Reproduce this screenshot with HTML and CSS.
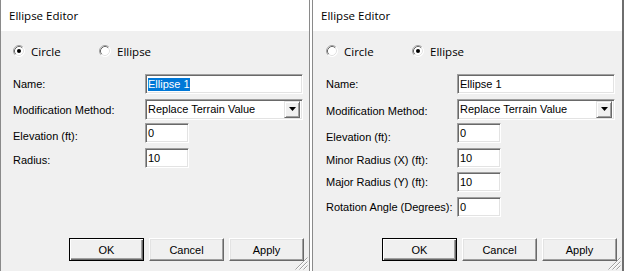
FILE: index.html
```html
<!DOCTYPE html>
<html>
<head>
<meta charset="utf-8">
<link rel="stylesheet" href="styles.css">
</head>
<body>
<div class="screen">
  <div class="dialog dlg-left">
    <div class="titlebar">Ellipse Editor</div>
    <div class="body">
      <div class="radios">
        <div class="radio first">
          <svg class="rb" width="12" height="12" viewBox="0 0 12 12"><circle cx="6" cy="6" r="5.5" fill="#fff"/><path d="M2.11 9.89A5.5 5.5 0 0 1 9.89 2.11" stroke="#a0a0a0" fill="none"/><path d="M9.89 2.11A5.5 5.5 0 0 1 2.11 9.89" stroke="#ffffff" fill="none"/><path d="M2.82 9.18A4.5 4.5 0 0 1 9.18 2.82" stroke="#696969" fill="none"/><path d="M9.18 2.82A4.5 4.5 0 0 1 2.82 9.18" stroke="#e3e3e3" fill="none"/><circle cx="6" cy="6" r="2" fill="#000"/></svg>
          <span>Circle</span>
        </div>
        <div class="radio">
          <svg class="rb" width="12" height="12" viewBox="0 0 12 12"><circle cx="6" cy="6" r="5.5" fill="#fff"/><path d="M2.11 9.89A5.5 5.5 0 0 1 9.89 2.11" stroke="#a0a0a0" fill="none"/><path d="M9.89 2.11A5.5 5.5 0 0 1 2.11 9.89" stroke="#ffffff" fill="none"/><path d="M2.82 9.18A4.5 4.5 0 0 1 9.18 2.82" stroke="#696969" fill="none"/><path d="M9.18 2.82A4.5 4.5 0 0 1 2.82 9.18" stroke="#e3e3e3" fill="none"/></svg>
          <span>Ellipse</span>
        </div>
      </div>
      <div class="form">
        <div class="lbl off0">Name:</div>
        <div class="textbox wide"><span class="sel">Ellipse 1</span></div>
        <div class="lbl off1">Modification Method:</div>
        <div class="combo">
          <span class="combo-text">Replace Terrain Value</span>
          <span class="combo-btn"><svg width="7" height="4" viewBox="0 0 7 4"><path d="M0 0H7L3.5 4Z" fill="#000"/></svg></span>
        </div>
        <div class="lbl off3">Elevation (ft):</div>
        <div class="textbox small">0</div>
        <div class="lbl off2">Radius:</div>
        <div class="textbox small">10</div>
      </div>
      <div class="buttons">
        <div class="btn default">OK</div>
        <div class="btn">Cancel</div>
        <div class="btn">Apply</div>
      </div>
    </div>
    <svg class="grip" width="13" height="13" viewBox="0 0 13 13"><path d="M12.5 0.5L0.5 12.5M12.5 4.5L4.5 12.5M12.5 8.5L8.5 12.5" stroke="#a0a0a0"/><path d="M12.5 1.5L1.5 12.5M12.5 5.5L5.5 12.5M12.5 9.5L9.5 12.5" stroke="#ffffff"/></svg>
  </div>

  <div class="dialog dlg-right">
    <div class="titlebar">Ellipse Editor</div>
    <div class="body">
      <div class="radios">
        <div class="radio first">
          <svg class="rb" width="12" height="12" viewBox="0 0 12 12"><circle cx="6" cy="6" r="5.5" fill="#fff"/><path d="M2.11 9.89A5.5 5.5 0 0 1 9.89 2.11" stroke="#a0a0a0" fill="none"/><path d="M9.89 2.11A5.5 5.5 0 0 1 2.11 9.89" stroke="#ffffff" fill="none"/><path d="M2.82 9.18A4.5 4.5 0 0 1 9.18 2.82" stroke="#696969" fill="none"/><path d="M9.18 2.82A4.5 4.5 0 0 1 2.82 9.18" stroke="#e3e3e3" fill="none"/></svg>
          <span>Circle</span>
        </div>
        <div class="radio">
          <svg class="rb" width="12" height="12" viewBox="0 0 12 12"><circle cx="6" cy="6" r="5.5" fill="#fff"/><path d="M2.11 9.89A5.5 5.5 0 0 1 9.89 2.11" stroke="#a0a0a0" fill="none"/><path d="M9.89 2.11A5.5 5.5 0 0 1 2.11 9.89" stroke="#ffffff" fill="none"/><path d="M2.82 9.18A4.5 4.5 0 0 1 9.18 2.82" stroke="#696969" fill="none"/><path d="M9.18 2.82A4.5 4.5 0 0 1 2.82 9.18" stroke="#e3e3e3" fill="none"/><circle cx="6" cy="6" r="2" fill="#000"/></svg>
          <span>Ellipse</span>
        </div>
      </div>
      <div class="form">
        <div class="lbl off0">Name:</div>
        <div class="textbox wide">Ellipse 1</div>
        <div class="lbl off2">Modification Method:</div>
        <div class="combo">
          <span class="combo-text">Replace Terrain Value</span>
          <span class="combo-btn"><svg width="7" height="4" viewBox="0 0 7 4"><path d="M0 0H7L3.5 4Z" fill="#000"/></svg></span>
        </div>
        <div class="lbl off4">Elevation (ft):</div>
        <div class="textbox small">0</div>
        <div class="lbl off2">Minor Radius (X) (ft):</div>
        <div class="textbox small">10</div>
        <div class="lbl off0">Major Radius (Y) (ft):</div>
        <div class="textbox small">10</div>
        <div class="lbl off0">Rotation Angle (Degrees):</div>
        <div class="textbox small">0</div>
      </div>
      <div class="buttons">
        <div class="btn default">OK</div>
        <div class="btn">Cancel</div>
        <div class="btn">Apply</div>
      </div>
    </div>
    <svg class="grip" width="13" height="13" viewBox="0 0 13 13"><path d="M12.5 0.5L0.5 12.5M12.5 4.5L4.5 12.5M12.5 8.5L8.5 12.5" stroke="#a0a0a0"/><path d="M12.5 1.5L1.5 12.5M12.5 5.5L5.5 12.5M12.5 9.5L9.5 12.5" stroke="#ffffff"/></svg>
  </div>
</div>
</body>
</html>
```

FILE: styles.css
```css
html, body {
  margin: 0;
  padding: 0;
  background: #ffffff;
}

.screen {
  display: flex;
  gap: 2px;
  width: 624px;
  height: 271px;
  overflow: hidden;
}

.dialog {
  position: relative;
  display: flex;
  flex-direction: column;
  height: 271px;
  box-sizing: border-box;
  border-left: 1px solid #8a8a8a;
  border-right: 1px solid #8a8a8a;
  background: #f0f0f0;
}

.dlg-left { width: 310px; }
.dlg-right { width: 312px; border-right: 2px solid #6e6e6e; }

.titlebar {
  height: 31px;
  flex: none;
  background: #ffffff;
  font-family: "Open Sans", "Noto Sans", sans-serif;
  font-size: 11.5px;
  line-height: 31px;
  padding-left: 8px;
  color: #000;
}

.body {
  flex: 1;
  display: flex;
  flex-direction: column;
  padding: 12px 0 0 0;
}

.radios {
  display: flex;
  align-items: center;
  height: 16px;
  padding-left: 12px;
  font-family: "Open Sans", "Noto Sans", sans-serif;
  font-size: 11.5px;
  color: #000;
}

.dlg-right .radios { padding-left: 13px; }

.radio {
  display: flex;
  align-items: center;
}

.radio.first { width: 86px; }

.rb {
  display: block;
  margin-right: 6px;
  flex: none;
}

.form {
  margin-top: 15px;
  display: grid;
  grid-template-columns: 132px auto;
  grid-auto-rows: 20px;
  row-gap: 4.6px;
  padding-left: 12px;
  font-family: "Liberation Sans", Arial, sans-serif;
  font-size: 11px;
  color: #000;
}

.dlg-right .form { padding-left: 13px; grid-template-columns: 131px auto; }

.lbl {
  padding-top: 4px;
  line-height: 13px;
  white-space: nowrap;
}

.lbl.off0 { padding-top: 4px; }
.lbl.off1 { padding-top: 5px; }
.lbl.off2 { padding-top: 6px; }
.lbl.off3 { padding-top: 7px; }
.lbl.off4 { padding-top: 8px; }

.textbox {
  box-sizing: border-box;
  height: 20px;
  background: #fff;
  border-style: solid;
  border-width: 1px;
  border-color: #a0a0a0 #ffffff #ffffff #a0a0a0;
  box-shadow: inset 1px 1px 0 #696969, inset -1px -1px 0 #e3e3e3;
  padding: 2px 2px 0 2px;
  line-height: 14px;
  white-space: nowrap;
}

.textbox.wide { width: 158px; }
.textbox.small { width: 44px; }

.sel {
  background: #0078d7;
  color: #fff;
  display: inline-block;
  line-height: 13px;
}

.combo {
  box-sizing: border-box;
  width: 158px;
  height: 21px;
  background: #fff;
  border-style: solid;
  border-width: 1px;
  border-color: #a0a0a0 #ffffff #ffffff #a0a0a0;
  box-shadow: inset 1px 1px 0 #696969, inset -1px -1px 0 #e3e3e3;
  display: flex;
  align-items: center;
  padding: 1px 2px 1px 2px;
}

.combo-text {
  flex: 1;
  line-height: 14px;
  white-space: nowrap;
}

.combo-btn {
  box-sizing: border-box;
  width: 16px;
  height: 17px;
  background: #f0f0f0;
  border-style: solid;
  border-width: 1px;
  border-color: #e3e3e3 #696969 #696969 #e3e3e3;
  box-shadow: inset 1px 1px 0 #ffffff, inset -1px -1px 0 #a0a0a0;
  display: flex;
  align-items: center;
  justify-content: center;
}

.combo-btn svg { display: block; }

.buttons {
  margin-top: auto;
  margin-bottom: 10px;
  display: flex;
  justify-content: flex-end;
  gap: 5px;
  padding-right: 5px;
  font-family: "Liberation Sans", Arial, sans-serif;
  font-size: 11px;
  color: #000;
}

.btn {
  box-sizing: border-box;
  width: 75px;
  height: 23px;
  background: #f0f0f0;
  border-style: solid;
  border-width: 1px;
  border-color: #ffffff #696969 #696969 #ffffff;
  box-shadow: inset -1px -1px 0 #a0a0a0, inset 1px 1px 0 #e3e3e3;
  display: flex;
  align-items: center;
  justify-content: center;
}

.btn.default {
  border: 1px solid #000;
  box-shadow: inset 1px 1px 0 #ffffff, inset -1px -1px 0 #696969, inset -2px -2px 0 #a0a0a0;
}

.grip {
  position: absolute;
  right: 1px;
  bottom: 1px;
  display: block;
}
```
